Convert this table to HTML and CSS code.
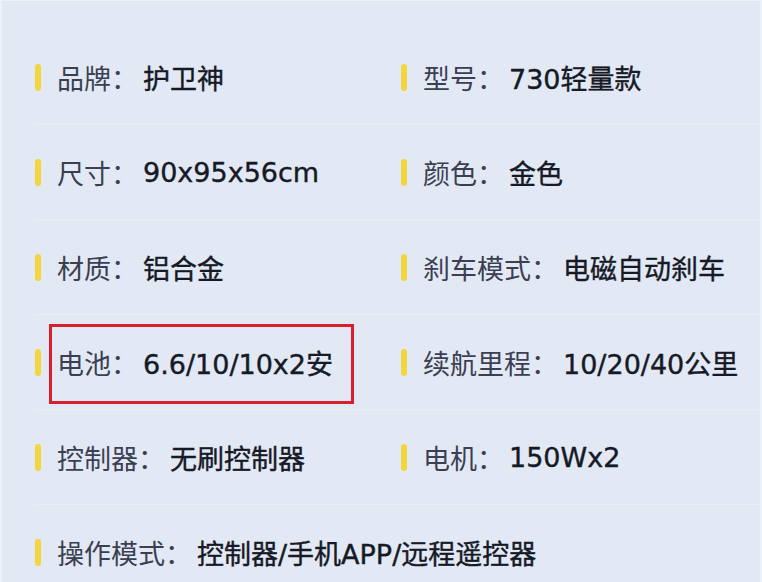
FILE: index.html
```html
<!DOCTYPE html>
<html lang="zh-CN">
<head>
    <meta charset="UTF-8">
    <meta name="viewport" content="width=device-width, initial-scale=1.0">
    <title>产品参数</title>
    <link rel="stylesheet" href="styles.css">
</head>
<body>
    <div class="card">
        <div class="specs">
            <div class="spec">
                <span class="bar"></span>
                <span class="label">品牌：</span>
                <span class="value">护卫神</span>
            </div>
            <div class="spec">
                <span class="bar"></span>
                <span class="label">型号：</span>
                <span class="value">730轻量款</span>
            </div>

            <div class="spec">
                <span class="bar"></span>
                <span class="label">尺寸：</span>
                <span class="value">90x95x56cm</span>
            </div>
            <div class="spec">
                <span class="bar"></span>
                <span class="label">颜色：</span>
                <span class="value">金色</span>
            </div>

            <div class="spec">
                <span class="bar"></span>
                <span class="label">材质：</span>
                <span class="value">铝合金</span>
            </div>
            <div class="spec">
                <span class="bar"></span>
                <span class="label">刹车模式：</span>
                <span class="value">电磁自动刹车</span>
            </div>

            <!-- marked in red in the original -->
            <div class="spec highlight">
                <span class="bar"></span>
                <span class="label">电池：</span>
                <span class="value">6.6/10/10x2安</span>
            </div>
            <div class="spec">
                <span class="bar"></span>
                <span class="label">续航里程：</span>
                <span class="value">10/20/40公里</span>
            </div>

            <div class="spec">
                <span class="bar"></span>
                <span class="label">控制器：</span>
                <span class="value">无刷控制器</span>
            </div>
            <div class="spec">
                <span class="bar"></span>
                <span class="label">电机：</span>
                <span class="value">150Wx2</span>
            </div>

            <div class="spec wide">
                <span class="bar"></span>
                <span class="label">操作模式：</span>
                <span class="value">控制器/手机APP/远程遥控器</span>
            </div>
        </div>
    </div>
</body>
</html>
```

FILE: styles.css
```css
html, body {
    margin: 0;
    padding: 0;
    height: 100%;
    overflow: hidden;
}

body {
    font-family: "Noto Sans CJK SC", "Noto Sans", sans-serif;
    background-color: #e3e9f4;
    color: #1c1f2e;
}

.card {
    height: 100%;
    box-sizing: border-box;
    border-left: 2px solid #edf1f8;
    border-right: 2px solid #edf1f8;
    border-top: 1px solid #edf1f8;
}

.specs {
    display: grid;
    grid-template-columns: 366px 1fr;
    padding: 29px 0 0 33px;
}

.spec {
    display: flex;
    align-items: center;
    height: 94px;
    position: relative;
    border-bottom: 1px solid rgba(255, 255, 255, 0.2);
}

.spec.wide {
    grid-column: 1 / 3;
}

.bar {
    width: 6px;
    height: 27px;
    border-radius: 3px;
    background: #f3d53c;
    margin-right: 16px;
    flex-shrink: 0;
}

.label {
    font-size: 27px;
    color: #3b3f52;
    margin-right: 5px;
    white-space: nowrap;
}

/* latin part of the values is wider than the CJK font's own */
.value {
    font-family: "DejaVu Sans", "Noto Sans CJK SC", sans-serif;
    font-size: 27px;
    color: #161926;
    -webkit-text-stroke: 0.4px #161926;
    white-space: nowrap;
}

/* red annotation box */
.highlight::after {
    content: '';
    position: absolute;
    left: 14px;
    top: 9px;
    width: 299px;
    height: 74px;
    border: 3px solid #d8202c;
}
```
